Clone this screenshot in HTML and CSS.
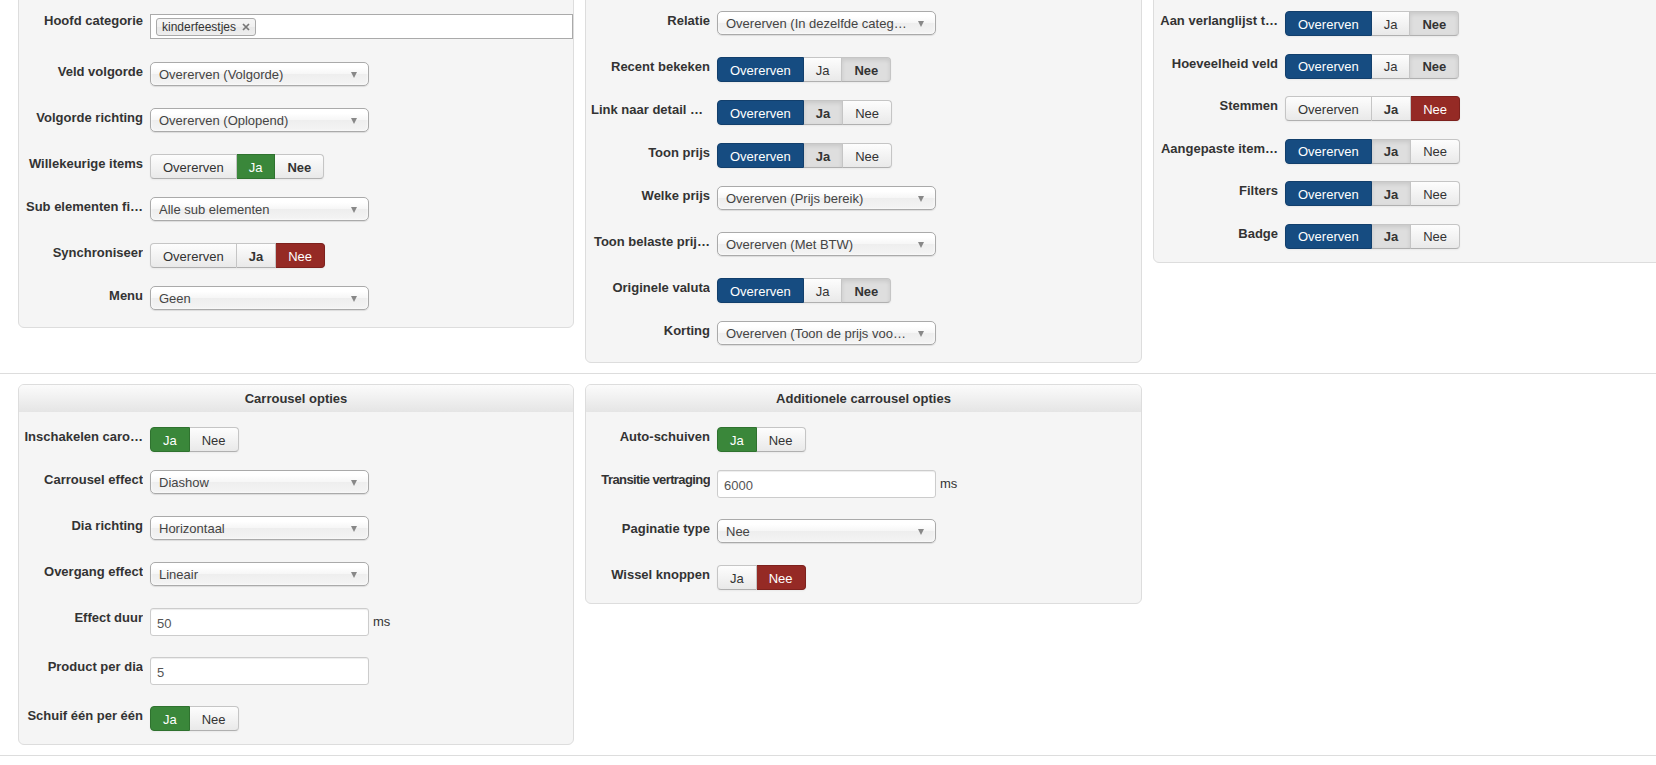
FILE: index.html
```html
<!DOCTYPE html>
<html lang="nl">
<head>
    <meta charset="UTF-8">
    <meta name="viewport" content="width=device-width, initial-scale=1.0">
    <title>Module opties</title>
    <link rel="stylesheet" href="styles.css">
</head>
<body>
    <div class="columns top">
        <div class="panel">
            <div class="field">
                <label>Hoofd categorie</label>
                <div class="controls">
                    <div class="tags">
                        <span class="tag">kinderfeestjes
                            <svg width="8" height="8" viewBox="0 0 8 8"><path d="M1 1L7 7M7 1L1 7" stroke="#777" stroke-width="1.7"/></svg>
                        </span>
                    </div>
                </div>
            </div>
            <div class="field">
                <label>Veld volgorde</label>
                <div class="controls"><div class="select"><span>Overerven (Volgorde)</span><i class="caret"></i></div></div>
            </div>
            <div class="field">
                <label>Volgorde richting</label>
                <div class="controls"><div class="select"><span>Overerven (Oplopend)</span><i class="caret"></i></div></div>
            </div>
            <div class="field">
                <label>Willekeurige items</label>
                <div class="controls">
                    <div class="toggle"><button>Overerven</button><button class="green">Ja</button><button class="bold">Nee</button></div>
                </div>
            </div>
            <div class="field">
                <label>Sub elementen fi…</label>
                <div class="controls"><div class="select"><span>Alle sub elementen</span><i class="caret"></i></div></div>
            </div>
            <div class="field">
                <label>Synchroniseer</label>
                <div class="controls">
                    <div class="toggle"><button>Overerven</button><button class="bold">Ja</button><button class="red">Nee</button></div>
                </div>
            </div>
            <div class="field">
                <label>Menu</label>
                <div class="controls"><div class="select"><span>Geen</span><i class="caret"></i></div></div>
            </div>
        </div>

        <div class="panel">
            <div class="field">
                <label>Relatie</label>
                <div class="controls"><div class="select"><span>Overerven (In dezelfde categ…</span><i class="caret"></i></div></div>
            </div>
            <div class="field">
                <label>Recent bekeken</label>
                <div class="controls">
                    <div class="toggle"><button class="blue">Overerven</button><button>Ja</button><button class="bold shade">Nee</button></div>
                </div>
            </div>
            <div class="field">
                <label>Link naar detail p…</label>
                <div class="controls">
                    <div class="toggle"><button class="blue">Overerven</button><button class="bold shade">Ja</button><button>Nee</button></div>
                </div>
            </div>
            <div class="field">
                <label>Toon prijs</label>
                <div class="controls">
                    <div class="toggle"><button class="blue">Overerven</button><button class="bold shade">Ja</button><button>Nee</button></div>
                </div>
            </div>
            <div class="field">
                <label>Welke prijs</label>
                <div class="controls"><div class="select"><span>Overerven (Prijs bereik)</span><i class="caret"></i></div></div>
            </div>
            <div class="field">
                <label>Toon belaste prij…</label>
                <div class="controls"><div class="select"><span>Overerven (Met BTW)</span><i class="caret"></i></div></div>
            </div>
            <div class="field">
                <label>Originele valuta</label>
                <div class="controls">
                    <div class="toggle"><button class="blue">Overerven</button><button>Ja</button><button class="bold shade">Nee</button></div>
                </div>
            </div>
            <div class="field">
                <label>Korting</label>
                <div class="controls"><div class="select"><span>Overerven (Toon de prijs voor…</span><i class="caret"></i></div></div>
            </div>
        </div>

        <div class="panel compact">
            <div class="field">
                <label>Aan verlanglijst t…</label>
                <div class="controls">
                    <div class="toggle"><button class="blue">Overerven</button><button>Ja</button><button class="bold shade">Nee</button></div>
                </div>
            </div>
            <div class="field">
                <label>Hoeveelheid veld</label>
                <div class="controls">
                    <div class="toggle"><button class="blue">Overerven</button><button>Ja</button><button class="bold shade">Nee</button></div>
                </div>
            </div>
            <div class="field">
                <label>Stemmen</label>
                <div class="controls">
                    <div class="toggle"><button>Overerven</button><button class="bold">Ja</button><button class="red">Nee</button></div>
                </div>
            </div>
            <div class="field">
                <label>Aangepaste item…</label>
                <div class="controls">
                    <div class="toggle"><button class="blue">Overerven</button><button class="bold shade">Ja</button><button>Nee</button></div>
                </div>
            </div>
            <div class="field">
                <label>Filters</label>
                <div class="controls">
                    <div class="toggle"><button class="blue">Overerven</button><button class="bold shade">Ja</button><button>Nee</button></div>
                </div>
            </div>
            <div class="field">
                <label>Badge</label>
                <div class="controls">
                    <div class="toggle"><button class="blue">Overerven</button><button class="bold shade">Ja</button><button>Nee</button></div>
                </div>
            </div>
        </div>
    </div>

    <hr class="divider">

    <div class="columns">
        <div class="panel titled">
            <div class="panel-title">Carrousel opties</div>
            <div class="field">
                <label>Inschakelen caro…</label>
                <div class="controls">
                    <div class="toggle"><button class="green">Ja</button><button>Nee</button></div>
                </div>
            </div>
            <div class="field">
                <label>Carrousel effect</label>
                <div class="controls"><div class="select"><span>Diashow</span><i class="caret"></i></div></div>
            </div>
            <div class="field">
                <label>Dia richting</label>
                <div class="controls"><div class="select"><span>Horizontaal</span><i class="caret"></i></div></div>
            </div>
            <div class="field">
                <label>Overgang effect</label>
                <div class="controls"><div class="select"><span>Lineair</span><i class="caret"></i></div></div>
            </div>
            <div class="field">
                <label>Effect duur</label>
                <div class="controls"><input class="text" type="text" value="50"><span class="unit">ms</span></div>
            </div>
            <div class="field">
                <label>Product per dia</label>
                <div class="controls"><input class="text" type="text" value="5"></div>
            </div>
            <div class="field">
                <label>Schuif één per één</label>
                <div class="controls">
                    <div class="toggle"><button class="green">Ja</button><button>Nee</button></div>
                </div>
            </div>
        </div>

        <div class="panel titled">
            <div class="panel-title">Additionele carrousel opties</div>
            <div class="field">
                <label>Auto-schuiven</label>
                <div class="controls">
                    <div class="toggle"><button class="green">Ja</button><button>Nee</button></div>
                </div>
            </div>
            <div class="field">
                <label class="narrow">Transitie vertraging</label>
                <div class="controls"><input class="text" type="text" value="6000"><span class="unit">ms</span></div>
            </div>
            <div class="field">
                <label>Paginatie type</label>
                <div class="controls"><div class="select"><span>Nee</span><i class="caret"></i></div></div>
            </div>
            <div class="field">
                <label>Wissel knoppen</label>
                <div class="controls">
                    <div class="toggle"><button>Ja</button><button class="red">Nee</button></div>
                </div>
            </div>
        </div>
    </div>

    <hr class="divider">
</body>
</html>
```

FILE: styles.css
```css
/* Module options screen */
body {
    font-family: "Liberation Sans", Arial, sans-serif;
    font-size: 13px;
    color: #333;
    background-color: #fff;
    margin: 0;
    overflow: hidden;
}

.columns {
    display: grid;
    grid-template-columns: 556px 557px 557px;
    column-gap: 11px;
    align-items: start;
    padding-left: 18px;
}

.columns.top {
    margin-top: -10px;
}

.divider {
    border: 0;
    border-top: 1px solid #ddd;
    margin: 10px 0;
}

.panel {
    background-color: #f5f5f5;
    border: 1px solid #ddd;
    border-radius: 6px;
    padding: 20px 0 13px;
}

.panel.titled {
    padding-top: 0;
}

.panel-title {
    height: 27px;
    line-height: 27px;
    text-align: center;
    font-weight: bold;
    background: linear-gradient(#fbfbfb, #e5e5e5);
    border-radius: 5px 5px 0 0;
    margin-bottom: 15px;
}

.field {
    display: grid;
    grid-template-columns: 119px 1fr;
    column-gap: 7px;
    padding-left: 5px;
    margin-bottom: 18px;
}

.panel.compact .field {
    margin-bottom: 17.5px;
}

.field:last-child,
.panel.compact .field:last-child {
    margin-bottom: 0;
}

.field label {
    font-weight: bold;
    text-align: right;
    line-height: 18px;
    padding-top: 1px;
    white-space: nowrap;
    overflow: hidden;
    text-overflow: ellipsis;
}

.field label.narrow {
    letter-spacing: -0.6px;
}

.controls {
    display: flex;
    align-items: flex-start;
    min-width: 0;
}

/* chosen style single select */
.select {
    display: flex;
    align-items: center;
    width: 219px;
    height: 24px;
    box-sizing: border-box;
    border: 1px solid #aaa;
    border-radius: 5px;
    background: linear-gradient(#fff 20%, #f6f6f6 50%, #eee 52%, #f4f4f4);
    box-shadow: inset 0 0 3px #fff, 0 1px 1px rgba(0, 0, 0, 0.1);
    color: #444;
    padding: 1px 11px 0 8px;
    margin-bottom: 4px;
}

.select span {
    flex: 1;
    white-space: nowrap;
    overflow: hidden;
    text-overflow: ellipsis;
}

.caret {
    width: 0;
    height: 0;
    border-left: 3.5px solid transparent;
    border-right: 3.5px solid transparent;
    border-top: 6px solid #888;
    margin-left: 8px;
}

/* chosen style multi select */
.tags {
    display: flex;
    align-items: center;
    width: 100%;
    height: 25px;
    box-sizing: border-box;
    border: 1px solid #aaa;
    background-color: #fff;
    padding: 0 5px;
    margin: 3px 0 5px;
}

.tag {
    display: flex;
    align-items: center;
    gap: 6px;
    height: 18px;
    box-sizing: border-box;
    border: 1px solid #aaa;
    border-radius: 3px;
    background: linear-gradient(#f4f4f4 20%, #f0f0f0 50%, #e8e8e8 52%, #eee);
    font-size: 12px;
    color: #333;
    padding: 0 5px;
}

.text {
    font: inherit;
    color: #555;
    width: 219px;
    height: 28px;
    box-sizing: border-box;
    border: 1px solid #ccc;
    border-radius: 3px;
    background-color: #fff;
    box-shadow: inset 0 1px 1px rgba(0, 0, 0, 0.075);
    padding: 2px 6px 0;
    margin: 0 0 3px;
}

.unit {
    line-height: 28px;
    margin-left: 4px;
}

/* yes / no button groups */
.toggle {
    display: flex;
    box-shadow: 0 1px 2px rgba(0, 0, 0, 0.05);
    border-radius: 4px;
}

.toggle button {
    font: inherit;
    color: #333;
    height: 25px;
    padding: 1px 12px 0;
    border: 1px solid #c5c5c5;
    border-bottom-color: #b0b0b0;
    border-left-width: 0;
    background: linear-gradient(#fdfdfd, #e9e9e9);
}

.toggle button:first-child {
    border-left-width: 1px;
    border-radius: 4px 0 0 4px;
}

.toggle button:last-child {
    border-radius: 0 4px 4px 0;
}

.toggle .bold {
    font-weight: bold;
}

.toggle .shade {
    background: #dedede;
    box-shadow: inset 0 2px 4px rgba(0, 0, 0, 0.1);
}

.toggle .blue {
    background: #164c81;
    border-color: #123f6c;
    color: #fff;
}

.toggle .green {
    background: #3a873a;
    border-color: #2f722f;
    color: #fff;
}

.toggle .red {
    background: #952a25;
    border-color: #7d211d;
    color: #fff;
}
```
